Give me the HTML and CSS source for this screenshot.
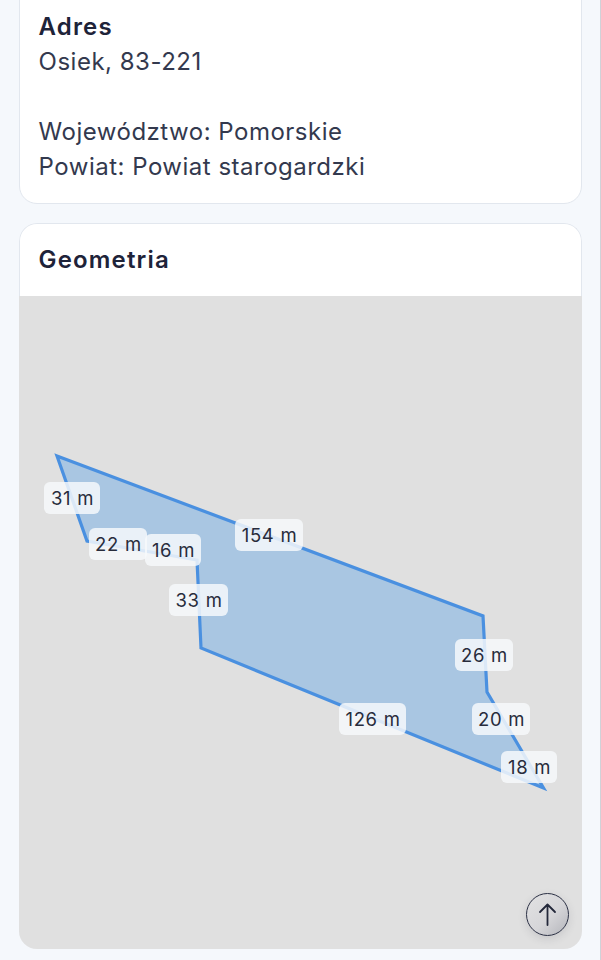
FILE: index.html
```html
<!DOCTYPE html>
<html lang="pl">
<head>
<meta charset="utf-8">
<title>Geometria</title>
<link rel="stylesheet" href="styles.css">
</head>
<body>
<main class="page">
  <section class="card card-address">
    <h2 class="title">Adres</h2>
    <p class="line">Osiek, 83-221</p>
    <p class="line line-gap">Województwo: Pomorskie</p>
    <p class="line">Powiat: Powiat starogardzki</p>
  </section>
  <section class="card-geo">
    <h2 class="title title-geo">Geometria</h2>
    <div class="map">
      <svg class="plot" viewBox="0 0 563 652" width="563" height="652" aria-hidden="true">
        <polygon class="parcel" points="38,160 464,320 468,396 524.5,492 182,352 178,264 68,245"/>
      </svg>
      <span class="tag t31">31 m</span>
      <span class="tag t154">154 m</span>
      <span class="tag t22">22 m</span>
      <span class="tag t16">16 m</span>
      <span class="tag t33">33 m</span>
      <span class="tag t26">26 m</span>
      <span class="tag t126">126 m</span>
      <span class="tag t20">20 m</span>
      <span class="tag t18">18 m</span>
      <button class="up" type="button" aria-label="Do góry">
        <svg viewBox="0 0 43 43" width="43" height="43" aria-hidden="true"><path d="M21.5 32V11.5M14 19 21.5 11.5 29 19"/></svg>
      </button>
    </div>
  </section>
</main>
</body>
</html>
```
FILE: styles.css
```css
* { box-sizing: border-box; }
html, body { margin: 0; height: 960px; overflow: hidden; }
body {
  background: #f5f8fc;
  font-family: Inter, "Liberation Sans", sans-serif;
  color: #242a40;
  -webkit-font-smoothing: antialiased;
}
.page {
  display: flex;
  flex-direction: column;
  gap: 19px;
  margin-top: -20px;
  padding: 0 18px 0 19px;
  height: 980px;
  border-right: 1px solid #cfd2d8;
}
.card {
  background: #fff;
  border: 1px solid #e2e7ee;
  border-radius: 18px;
  overflow: hidden;
}
.card-address { padding: 27.5px 18.6px 19px; height: 224px; flex: none; }
.title {
  margin: 0;
  font-size: 24px;
  line-height: 35px;
  font-weight: 600;
  color: #1e2339;
  letter-spacing: 1.15px;
}
.line {
  margin: 0;
  font-size: 24px;
  line-height: 35.5px;
  font-weight: 400;
  color: #33394e;
  letter-spacing: 0.5px;
}
.line-gap { margin-top: 34.5px; }
.card-geo { height: 726px; flex: none; border-radius: 18px; overflow: hidden; }
.title-geo {
  padding: 18px 18.6px 17px;
  height: 73px;
  background: #fff;
  border: 1px solid #e2e7ee;
  border-bottom: 0;
  border-radius: 18px 18px 0 0;
}
.map { position: relative; height: 653px; background: #e0e0e0; }
.plot { display: block; }
.parcel {
  fill: #a9c6e2;
  stroke: #4a90e0;
  stroke-width: 3.2;
  stroke-linejoin: miter;
}
.tag {
  position: absolute;
  height: 32px;
  padding: 0 6px;
  display: flex;
  align-items: center;
  justify-content: center;
  font-size: 18.5px;
  letter-spacing: 0.7px;
  text-indent: 1px;
  color: #282c3c;
  background: rgba(247, 249, 252, 0.84);
  border-radius: 6px;
  white-space: nowrap;
}
.t31 { left: 25px; top: 186px; width: 56px; }
.t154 { left: 216px; top: 223px; width: 68px; }
.t22 { left: 70px; top: 232px; width: 58px; }
.t16 { left: 126px; top: 238px; width: 56px; }
.t33 { left: 150px; top: 288px; width: 59px; }
.t26 { left: 436px; top: 343px; width: 58px; }
.t126 { left: 320px; top: 407px; width: 67px; }
.t20 { left: 453px; top: 407px; width: 58px; }
.t18 { left: 482px; top: 455px; width: 56px; }
.up {
  position: absolute;
  left: 507px;
  top: 597px;
  width: 43px;
  height: 43px;
  padding: 0;
  border: 1.5px solid #2b3044;
  border-radius: 50%;
  background: linear-gradient(135deg, #e2e2e3 0%, #d6d6d9 55%, #b4b5bb 100%);
  box-shadow: 0 3px 8px rgba(60, 60, 70, 0.14);
  display: flex;
  align-items: center;
  justify-content: center;
}
.up svg { display: block; flex: none; margin: -1.5px; }
.up path { fill: none; stroke: #23283a; stroke-width: 1.8; stroke-linecap: round; stroke-linejoin: round; }
```
